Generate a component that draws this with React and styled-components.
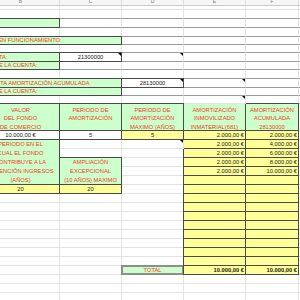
import styled, { createGlobalStyle, css } from "styled-components";

const GREEN = "#ccffcc";
const YELLOW = "#ffff99";
const DARK = "#4a4a4a";
const GRAY = "#9b9b9b";
const RED = "#f23a22";

const GlobalStyle = createGlobalStyle`
  html, body {
    margin: 0;
    padding: 0;
    background: #fff;
    overflow: hidden;
  }
  body {
    font-family: "Liberation Sans", Arial, sans-serif;
  }
`;

const Sheet = styled.div`
  display: grid;
  grid-template-columns: 78px 62px 62px 62px 53px 40px;
  grid-template-rows: 6px 4px 9px 9px 9px 8px 8px 9px 8px 9px 9px 8px 8px 27px repeat(19, 9px);
  margin-left: -18px;
  width: 357px;
  font-size: 5.75px;
  line-height: 8.6px;
  color: #1a1a1a;
`;

const Head = styled.div`
  box-sizing: border-box;
  background: #f6f6f6;
  border-right: 1px solid #dcdcdc;
  border-bottom: 1px solid #c9c9c9;
  color: #777;
  font-size: 5px;
  line-height: 3px;
  text-align: center;
  overflow: hidden;
`;

const Cell = styled.div`
  position: relative;
  box-sizing: border-box;
  display: flex;
  align-items: ${(p) => (p.$top ? "flex-start" : "center")};
  justify-content: ${(p) =>
    p.$align === "right" ? "flex-end" : p.$align === "left" ? "flex-start" : "center"};
  grid-column: span ${(p) => p.$span || 1};
  grid-row: span ${(p) => p.$rows || 1};
  background: ${(p) => p.$bg || "#fff"};
  color: ${(p) => (p.$red ? RED : "#1a1a1a")};
  font-weight: ${(p) => (p.$bold ? 700 : 400)};
  white-space: nowrap;
  padding: ${(p) => (p.$top ? "1.5px 1px 0" : "0 1px")};
  border-right: 1px solid #e3e3e3;
  border-bottom: 1px solid ${(p) => p.$line || "#e3e3e3"};

  ${(p) =>
    p.$box &&
    css`
      margin: -1px 0 0 -1px;
      border: ${p.$thick ? 2 : 1}px solid ${p.$box};
      z-index: 1;
    `}

  ${(p) =>
    p.$mark &&
    css`
      z-index: 2;
      &::after {
        content: "";
        position: absolute;
        top: 0;
        right: 0;
        border-top: 3px solid #000;
        border-left: 3px solid transparent;
      }
    `}
`;

// label text anchored to where it ends on screen, its start runs off the left edge
const Label = styled.span`
  display: flex;
  justify-content: flex-end;
  width: ${(p) => p.$end + 17}px;
  white-space: nowrap;
`;

const Text = styled.span`
  text-align: center;
  line-height: ${(p) => p.$lh || 8.6}px;
`;

const Blanks = ({ n, line }) =>
  Array.from({ length: n }, (_, i) => <Cell key={i} $line={line} />);

const Money = ({ children, bold }) => (
  <Cell $bg={YELLOW} $box={DARK} $align="right" $bold={bold}>
    {children}
  </Cell>
);

const Header = ({ children }) => (
  <Cell $bg={GREEN} $box={DARK} $red $top>
    <Text>{children}</Text>
  </Cell>
);

const Field = ({ span, end, children }) => (
  <Cell $span={span} $bg={GREEN} $box={DARK} $red $align="left" $line={GRAY}>
    <Label $end={end}>{children}</Label>
  </Cell>
);

const accumulated = ["4.000,00 €", "6.000,00 €", "8.000,00 €", "10.000,00 €"];

export default function App() {
  return (
    <>
      <GlobalStyle />
      <Sheet>
        {["B", "C", "D", "E", "F", ""].map((l, i) => (
          <Head key={i}>{l}</Head>
        ))}

        <Blanks n={6} />
        <Blanks n={6} line={GRAY} />

        <Cell $bg={GREEN} $box={DARK} />
        <Blanks n={5} line={GRAY} />

        <Blanks n={6} line={GRAY} />

        <Field span={2} end={61.7}>FECHA DE PUESTA EN FUNCIONAMIENTO:</Field>
        <Blanks n={4} line={GRAY} />

        <Blanks n={6} line={GRAY} />

        <Field end={7.5}>CUENTA:</Field>
        <Cell $box={DARK} $mark>21300000</Cell>
        <Cell $line={GRAY} $mark />
        <Blanks n={3} line={GRAY} />

        <Field end={37.5}>NOMBRE DE LA CUENTA:</Field>
        <Blanks n={5} line={GRAY} />

        <Blanks n={6} line={GRAY} />

        <Field span={2} end={89.5}>CUENTA AMORTIZACIÓN ACUMULADA</Field>
        <Cell $box={DARK} $mark>28130000</Cell>
        <Cell $line={GRAY} $mark />
        <Blanks n={2} line={GRAY} />

        <Field span={2} end={37.5}>NOMBRE DE LA CUENTA:</Field>
        <Blanks n={4} line={GRAY} />

        <Blanks n={3} />
        <Cell $mark />
        <Blanks n={2} />

        <Header>VALOR<br />DEL FONDO<br />DE COMERCIO</Header>
        <Header>PERIODO DE<br />AMORTIZACIÓN</Header>
        <Header>PERIODO DE<br />AMORTIZACIÓN<br />MAXIMO (AÑOS)</Header>
        <Header>AMORTIZACIÓN<br />INMOVILIZADO<br />INMATERIAL(681)</Header>
        <Header>AMORTIZACIÓN<br />ACUMULADA<br />28130000</Header>
        <Cell />

        <Cell $box={DARK}>10.000,00 €</Cell>
        <Cell $box={DARK}>5</Cell>
        <Cell $bg={YELLOW} $box={DARK}>5</Cell>
        <Money>2.000,00 €</Money>
        <Money>2.000,00 €</Money>
        <Cell />

        <Cell $rows={5} $bg={GREEN} $box={DARK} $red>
          <Text $lh={9}>
            PERIODO EN EL<br />CUAL EL FONDO<br />CONTRIBUYE A LA<br />OBTENCIÓN INGRESOS<br />(AÑOS)
          </Text>
        </Cell>
        <Cell />
        <Cell $mark />
        <Money>2.000,00 €</Money>
        <Money>{accumulated[0]}</Money>
        <Cell />

        <Blanks n={2} />
        <Money>2.000,00 €</Money>
        <Money>{accumulated[1]}</Money>
        <Cell />

        <Cell $rows={3} $bg={GREEN} $box={DARK} $red>
          <Text $lh={9}>
            AMPLIACIÓN<br />EXCEPCIONAL<br />(10 AÑOS) MAXIMO
          </Text>
        </Cell>
        <Cell />
        <Money>2.000,00 €</Money>
        <Money>{accumulated[2]}</Money>
        <Cell />

        <Cell />
        <Money>2.000,00 €</Money>
        <Money>{accumulated[3]}</Money>
        <Cell />

        <Cell />
        <Money />
        <Money />
        <Cell />

        <Cell $bg={YELLOW} $box={DARK}>20</Cell>
        <Cell $bg={YELLOW} $box={DARK}>20</Cell>
        <Cell />
        <Money />
        <Money />
        <Cell />

        {Array.from({ length: 8 }, (_, i) => (
          <Row key={i} />
        ))}

        <Blanks n={2} />
        <Cell $bg={GREEN} $box="#8d8d8d" $thick $red>TOTAL</Cell>
        <Money bold>10.000,00 €</Money>
        <Money bold>10.000,00 €</Money>
        <Cell />

        <Blanks n={18} />
      </Sheet>
    </>
  );
}

function Row() {
  return (
    <>
      <Blanks n={3} />
      <Money />
      <Money />
      <Cell />
    </>
  );
}
